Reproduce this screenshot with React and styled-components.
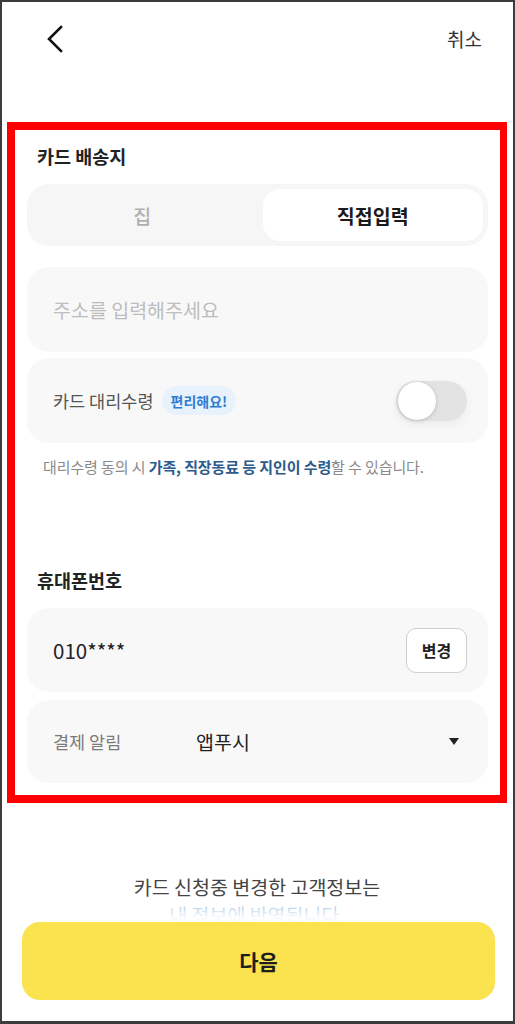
import React from "react";
import styled, { createGlobalStyle } from "styled-components";

const Global = createGlobalStyle`
  html, body { margin: 0; padding: 0; background: #fff; }
  body { font-family: "Noto Sans CJK KR", "Noto Sans", sans-serif; -webkit-font-smoothing: antialiased; }
  * { box-sizing: border-box; }
`;

const Frame = styled.div`
  position: relative;
  width: 515px;
  height: 1024px;
  border: 2px solid #3c3c3c;
  border-bottom-width: 3px;
  overflow: hidden;
  background: #fff;
  display: flex;
  flex-direction: column;
`;

const Header = styled.header`
  height: 73px;
  flex-shrink: 0;
  display: flex;
  align-items: center;
  justify-content: space-between;
  padding: 0 31px 0 44px;
`;

const BackButton = styled.button`
  border: 0;
  background: none;
  padding: 0;
  width: 20px;
  height: 30px;
  display: flex;
  align-items: center;
`;

const CancelText = styled.span`
  font-size: 19px;
  color: #333;
`;

const Main = styled.main`
  padding: 47px 6px 0 5px;
  display: flex;
  flex-direction: column;
`;

const Highlight = styled.section`
  border: 8px solid #ff0000;
  border-right-width: 7px;
  padding: 14px 12px 12px;
  display: flex;
  flex-direction: column;
`;

const SectionTitle = styled.h2`
  margin: 0 0 0 10px;
  font-size: 18.5px;
  line-height: 24px;
  font-weight: 700;
  color: #222;
  margin-top: ${(p) => p.$top || 0}px;
`;

const Segmented = styled.div`
  margin-top: 16px;
  height: 62px;
  background: #f6f6f6;
  border-radius: 22px;
  padding: 5px;
  display: grid;
  grid-template-columns: 1fr 1fr;
  gap: 10px;
`;

const SegItem = styled.div`
  display: flex;
  align-items: center;
  justify-content: center;
  border-radius: 17px;
  font-size: 19.5px;
  background: ${(p) => (p.$active ? "#fff" : "transparent")};
  color: ${(p) => (p.$active ? "#1a1a1a" : "#b0b0b0")};
  font-weight: ${(p) => (p.$active ? 700 : 500)};
`;

const FieldRow = styled.div`
  height: ${(p) => p.$h || 85}px;
  margin-top: ${(p) => p.$top || 0}px;
  background: #f8f8f8;
  border-radius: 22px;
  display: flex;
  align-items: center;
  padding: 0 21px 0 26px;
`;

const Placeholder = styled.span`
  font-size: 19.5px;
  color: #bdbdbd;
`;

const RowLabel = styled.span`
  font-size: 17.5px;
  color: ${(p) => p.$color || "#555"};
  width: ${(p) => (p.$w ? p.$w + "px" : "auto")};
  flex-shrink: 0;
`;

const Badge = styled.span`
  margin-left: 8px;
  height: 29px;
  padding: 0 9px;
  border-radius: 15px;
  background: #e7f2fc;
  color: #2f7dd1;
  font-size: 14px;
  font-weight: 700;
  display: inline-flex;
  align-items: center;
`;

const Spacer = styled.div`
  flex: 1;
`;

const Toggle = styled.div`
  width: 71px;
  height: 40px;
  border-radius: 20px;
  background: #e3e3e3;
  position: relative;
  box-shadow: 0 4px 10px rgba(0, 0, 0, 0.05);
`;

const Knob = styled.div`
  position: absolute;
  left: 2px;
  top: 1px;
  width: 38px;
  height: 38px;
  border-radius: 50%;
  background: #fff;
  box-shadow: 0 1px 4px rgba(0, 0, 0, 0.18);
`;

const Note = styled.p`
  margin: 14px 0 0 16px;
  font-size: 15px;
  line-height: 20px;
  color: #8a8a8a;
  letter-spacing: -0.1px;
`;

const NoteStrong = styled.strong`
  color: #2c5b8c;
  font-weight: 700;
`;

const PhoneText = styled.span`
  font-size: 20.5px;
  color: #222;
`;

const ChangeButton = styled.button`
  width: 61px;
  height: 45px;
  border: 1px solid #cfcfcf;
  border-radius: 10px;
  background: #fff;
  font-family: inherit;
  font-size: 16px;
  font-weight: 700;
  color: #222;
  padding: 0;
`;

const ValueText = styled.span`
  font-size: 19.5px;
  color: #222;
`;

const Caret = styled.span`
  width: 0;
  height: 0;
  border-left: 5px solid transparent;
  border-right: 5px solid transparent;
  border-top: 7px solid #222;
  margin-right: 8px;
`;

const InfoText = styled.div`
  margin: 70px 0 0;
  text-align: center;
  font-size: 19.5px;
  line-height: 28px;
  color: #444;
  display: flex;
  flex-direction: column;
  align-items: center;
`;

const InfoLine = styled.span`
  display: block;
  color: ${(p) => p.$color || "inherit"};
`;

const BottomBar = styled.div`
  position: absolute;
  left: 0;
  right: 0;
  bottom: 0;
  padding: 20px 18px 21px 20px;
  background: linear-gradient(to bottom, rgba(255,255,255,0) 0px, rgba(255,255,255,0.85) 14px, #fff 22px);
`;

const NextButton = styled.button`
  width: 100%;
  height: 78px;
  border: 0;
  border-radius: 18px;
  background: #fae34f;
  font-family: inherit;
  font-size: 21px;
  font-weight: 700;
  color: #1e1e1e;
`;

export default function App() {
  return (
    <>
      <Global />
      <Frame>
        <Header>
          <BackButton aria-label="뒤로">
            <svg width="18" height="28" viewBox="0 0 18 28" fill="none">
              <path d="M15 2 L3 14 L15 26" stroke="#111" strokeWidth="2.6" strokeLinecap="square" strokeLinejoin="miter" />
            </svg>
          </BackButton>
          <CancelText>취소</CancelText>
        </Header>
        <Main>
          <Highlight>
            <SectionTitle>카드 배송지</SectionTitle>
            <Segmented>
              <SegItem>집</SegItem>
              <SegItem $active>직접입력</SegItem>
            </Segmented>
            <FieldRow $top={21}>
              <Placeholder>주소를 입력해주세요</Placeholder>
            </FieldRow>
            <FieldRow $top={6}>
              <RowLabel>카드 대리수령</RowLabel>
              <Badge>편리해요!</Badge>
              <Spacer />
              <Toggle>
                <Knob />
              </Toggle>
            </FieldRow>
            <Note>
              대리수령 동의 시 <NoteStrong>가족, 직장동료 등 지인이 수령</NoteStrong>할 수 있습니다.
            </Note>
            <SectionTitle $top={91}>휴대폰번호</SectionTitle>
            <FieldRow $top={16} $h={84}>
              <PhoneText>010****</PhoneText>
              <Spacer />
              <ChangeButton>변경</ChangeButton>
            </FieldRow>
            <FieldRow $top={8} $h={83}>
              <RowLabel $color="#7a7a7a" $w={143}>결제 알림</RowLabel>
              <ValueText>앱푸시</ValueText>
              <Spacer />
              <Caret />
            </FieldRow>
          </Highlight>
          <InfoText>
            <InfoLine>카드 신청중 변경한 고객정보는</InfoLine>
            <InfoLine $color="#9cc3e6">내 정보에 반영됩니다.</InfoLine>
          </InfoText>
        </Main>
        <BottomBar>
          <NextButton>다음</NextButton>
        </BottomBar>
      </Frame>
    </>
  );
}
